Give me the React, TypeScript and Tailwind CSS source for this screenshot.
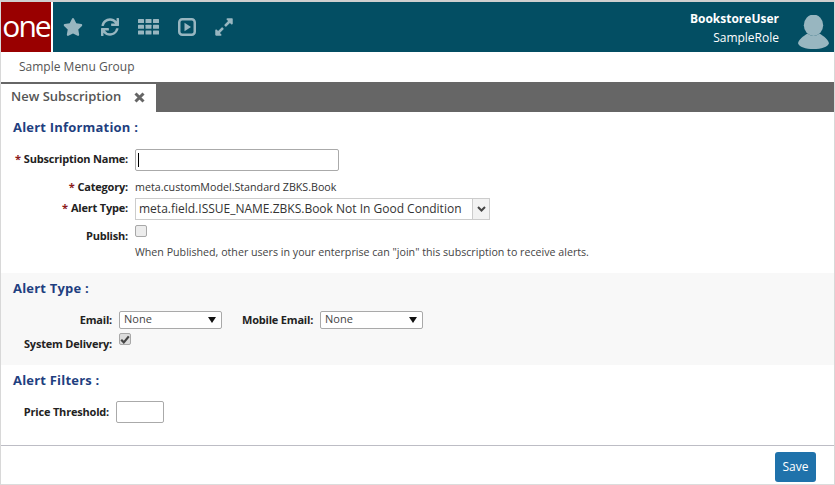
import { FaStar, FaSync, FaExpandAlt } from "react-icons/fa";

const labelCls = "text-[11px] font-bold text-[#222] whitespace-nowrap tracking-[-0.2px]";
const headingCls = "text-[13px] font-bold text-[#1f3f80] tracking-[0.2px]";

function Req() {
  return <span className="text-[#8b1a1a] mr-[3px]">*</span>;
}

function NativeSelect({ width, label }: { width: string; label: string }) {
  return (
    <div className={`${width} h-[18px] flex items-center justify-between rounded-[2px] border border-[#a9a9a9] bg-white pl-[4px] pr-[4px]`}>
      <span className="text-[11px] text-[#444] -mt-[1px]">{label}</span>
      <svg width="8" height="6" viewBox="0 0 8 6" className="mr-[1px]">
        <path d="M0 0h8L4 6z" fill="#111" />
      </svg>
    </div>
  );
}

function Checkbox({ checked }: { checked?: boolean }) {
  return (
    <div className={`w-[12px] h-[12px] rounded-[2px] border border-[#a8a8a8] flex items-center justify-center ${checked ? "bg-[#dcdcdc]" : "bg-[#ececec]"}`}>
      {checked && (
        <svg width="10" height="9" viewBox="0 0 10 9">
          <path d="M1.2 4.8 3.8 7.4 8.8 1.4" fill="none" stroke="#444" strokeWidth="2.2" />
        </svg>
      )}
    </div>
  );
}

export default function App() {
  return (
    <div className="w-[835px] h-[485px] overflow-hidden bg-white border-x border-t-2 border-b border-x-[#d8d8d8] border-t-[#cfcfcf] border-b-[#dcdcdc] flex flex-col font-['Open_Sans',sans-serif]">
      <header className="h-[50px] shrink-0 flex bg-[#034e63]">
        <div className="w-[50px] h-full bg-[#990000] flex items-center justify-center">
          <span className="text-[30px] leading-none text-white tracking-[-2px] font-normal -mt-[3px]">one</span>
        </div>
        <div className="w-[2px] bg-white" />
        <div className="flex items-center pl-[10px] text-[#98b6c0]">
          <FaStar size={20} />
          <FaSync size={18} className="ml-[18px]" />
          <svg width="22" height="16" viewBox="0 0 22 16" className="ml-[19px]" fill="currentColor">
            <rect x="0" y="0" width="6" height="4" rx="0.5" />
            <rect x="7.5" y="0" width="6" height="4" rx="0.5" />
            <rect x="15" y="0" width="6" height="4" rx="0.5" />
            <rect x="0" y="5.8" width="6" height="4" rx="0.5" />
            <rect x="7.5" y="5.8" width="6" height="4" rx="0.5" />
            <rect x="15" y="5.8" width="6" height="4" rx="0.5" />
            <rect x="0" y="11.6" width="6" height="4" rx="0.5" />
            <rect x="7.5" y="11.6" width="6" height="4" rx="0.5" />
            <rect x="15" y="11.6" width="6" height="4" rx="0.5" />
          </svg>
          <svg width="18" height="18" viewBox="0 0 18 18" className="ml-[18px]">
            <rect x="1.25" y="1.25" width="15.5" height="15.5" rx="3" fill="none" stroke="currentColor" strokeWidth="2.5" />
            <path d="M6.5 4.8v8.4L13 9z" fill="currentColor" />
          </svg>
          <FaExpandAlt size={20} className="ml-[18px]" />
        </div>
        <div className="ml-auto flex">
          <div className="text-right pt-[8px] text-white">
            <div className="text-[12px] font-bold leading-[17px]">BookstoreUser</div>
            <div className="text-[12px] leading-[17px] mt-[2px]">SampleRole</div>
          </div>
          <svg width="31" height="35" viewBox="0 0 32 36" className="ml-[19px] mr-[5px] mt-[13px]" fill="#98b6c0">
            <ellipse cx="16" cy="10.5" rx="10" ry="11" />
            <path d="M10 19C5 22 1 25 0 29c1 4 8 6 16 6s15-2 16-6c-1-4-5-7-10-10-3 3-9 3-12 0z" />
          </svg>
        </div>
      </header>

      <div className="h-[30px] shrink-0 flex items-center pl-[18px] text-[12px] text-[#555]">Sample Menu Group</div>

      <div className="h-[30px] shrink-0 bg-[#666] flex items-end">
        <div className="w-[155px] h-[28px] bg-white flex items-center pl-[10px] pb-[2px]">
          <span className="text-[13px] font-semibold text-[#555]">New Subscription</span>
          <svg width="11" height="11" viewBox="0 0 11 11" className="ml-[13px]">
            <path d="M1.5 1.5l8 8M9.5 1.5l-8 8" stroke="#666" strokeWidth="3" />
          </svg>
        </div>
      </div>

      <main className="flex-1 min-h-0 flex flex-col">
        <section className="h-[161px] shrink-0 pl-[12px] pt-[6px]">
          <h2 className={`${headingCls} leading-[18px]`}>Alert Information :</h2>
          <div className="grid grid-cols-[115px_1fr] mt-[13px] items-center">
            <div className={`${labelCls} text-right -mt-[1px]`}><Req />Subscription Name:</div>
            <div className="pl-[7px]">
              <div className="w-[204px] h-[22px] rounded-[2px] border border-[#aaa] bg-white flex items-center pl-[2px]">
                <div className="w-px h-[14px] bg-black" />
              </div>
            </div>
            <div className={`${labelCls} text-right mt-[8px]`}><Req />Category:</div>
            <div className="pl-[7px] text-[10.7px] text-[#333] mt-[8px]">meta.customModel.Standard ZBKS.Book</div>
            <div className={`${labelCls} text-right mt-[2px]`}><Req />Alert Type:</div>
            <div className="pl-[7px] mt-[2px]">
              <div className="w-[355px] h-[22px] border border-[#ccc] bg-white flex items-center">
                <span className="flex-1 pl-[3px] text-[12px] text-[#333] whitespace-nowrap">meta.field.ISSUE_NAME.ZBKS.Book Not In Good Condition</span>
                <div className="w-[17px] h-full border-l border-[#ccc] bg-[#f2f2f2] flex items-center justify-center">
                  <svg width="9" height="6" viewBox="0 0 9 6">
                    <path d="M1 1l3.5 3.5L8 1" fill="none" stroke="#444" strokeWidth="2" />
                  </svg>
                </div>
              </div>
            </div>
            <div className={`${labelCls} text-right mt-[8px]`}>Publish:</div>
            <div className="pl-[7px] mt-[3px] self-start pt-[2px]"><Checkbox /></div>
            <div />
            <div className="pl-[7px] text-[10.66px] text-[#444] mt-[1px] whitespace-nowrap">When Published, other users in your enterprise can &quot;join&quot; this subscription to receive alerts.</div>
          </div>
        </section>

        <section className="h-[92px] shrink-0 bg-[#f8f8f8] pl-[12px] pt-[6px]">
          <h2 className={`${headingCls} leading-[18px]`}>Alert Type :</h2>
          <div className="flex items-center mt-[14px]">
            <div className={`${labelCls} w-[99px] text-right`}>Email:</div>
            <div className="ml-[7px]"><NativeSelect width="w-[103px]" label="None" /></div>
            <div className={`${labelCls} ml-[20px]`}>Mobile Email:</div>
            <div className="ml-[7px]"><NativeSelect width="w-[103px]" label="None" /></div>
          </div>
          <div className="flex items-start mt-[4px]">
            <div className={`${labelCls} w-[99px] text-right pt-[3px]`}>System Delivery:</div>
            <div className="ml-[7px]"><Checkbox checked /></div>
          </div>
        </section>

        <section className="flex-1 pl-[12px] pt-[6px] border-b border-[#bdbdc5]">
          <h2 className={`${headingCls} leading-[18px]`}>Alert Filters :</h2>
          <div className="flex items-center mt-[12px]">
            <div className={`${labelCls} w-[96px] text-right`}>Price Threshold:</div>
            <div className="ml-[7px] w-[48px] h-[22px] rounded-[2px] border border-[#aaa] bg-white" />
          </div>
        </section>
      </main>

      <footer className="h-[38px] shrink-0 flex items-start justify-end pr-[18px] pt-[6px]">
        <button className="w-[41px] h-[30px] rounded-[3px] bg-[#1f72ab] text-white text-[12px]">Save</button>
      </footer>
    </div>
  );
}
